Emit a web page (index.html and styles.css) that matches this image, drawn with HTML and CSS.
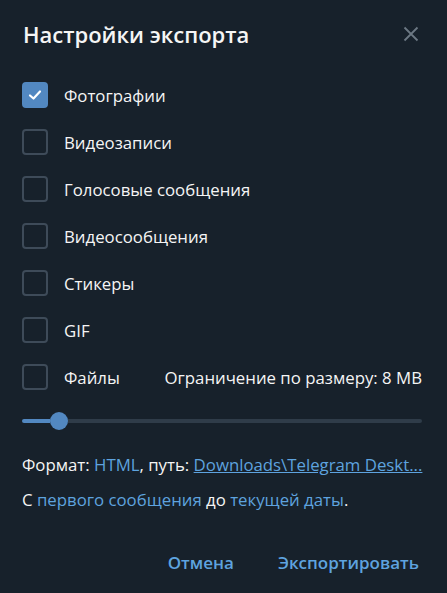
FILE: index.html
```html
<!DOCTYPE html>
<html lang="ru">
<head>
<meta charset="utf-8">
<link rel="stylesheet" href="styles.css">
</head>
<body>
<div class="box">
  <div class="header">
    <div class="title">Настройки экспорта</div>
    <svg class="close" width="16" height="16" viewBox="0 0 16 16"><path d="M1.5 1.5L14.5 14.5M14.5 1.5L1.5 14.5" stroke="#6c7883" stroke-width="1.8" fill="none"/></svg>
  </div>
  <div class="list">
    <div class="row"><span class="cb on"><svg width="14" height="12" viewBox="0 0 14 12"><path d="M2 6.5L5.5 9.5L12 2.5" stroke="#fff" stroke-width="2.2" fill="none" stroke-linecap="round" stroke-linejoin="round"/></svg></span><span class="label">Фотографии</span></div>
    <div class="row"><span class="cb"></span><span class="label">Видеозаписи</span></div>
    <div class="row"><span class="cb"></span><span class="label">Голосовые сообщения</span></div>
    <div class="row"><span class="cb"></span><span class="label">Видеосообщения</span></div>
    <div class="row"><span class="cb"></span><span class="label">Стикеры</span></div>
    <div class="row"><span class="cb"></span><span class="label">GIF</span></div>
    <div class="row"><span class="cb"></span><span class="label">Файлы</span><span class="limit">Ограничение по размеру: 8 MB</span></div>
  </div>
  <div class="slider"><div class="fill"></div><div class="knob"></div><div class="rest"></div></div>
  <div class="info">Формат: <span class="link">HTML</span>, путь: <span class="link u">Downloads\Telegram Deskt...</span></div>
  <div class="info second">С <span class="link">первого сообщения</span> до <span class="link">текущей даты</span>.</div>
  <div class="buttons">
    <span class="btn">Отмена</span>
    <span class="btn">Экспортировать</span>
  </div>
</div>
</body>
</html>
```
FILE: styles.css
```css
html, body {
  margin: 0;
  padding: 0;
  background: #17212b;
}
body {
  width: 447px;
  height: 593px;
  overflow: hidden;
  font-family: "Open Sans", "Noto Sans", sans-serif;
  color: #f5f5f5;
  font-size: 16.8px;
}
.box {
  display: flex;
  flex-direction: column;
  padding: 0 25px 0 22px;
}
.header {
  display: flex;
  align-items: center;
  justify-content: space-between;
  height: 68px;
  padding-left: 1px;
}
.title {
  font-size: 22px;
  font-weight: 600;
}
.close {
  margin-right: 3px;
}
.list {
  display: flex;
  flex-direction: column;
  gap: 21px;
  margin-top: 14px;
}
.row {
  display: flex;
  align-items: center;
  height: 26px;
}
.cb {
  width: 26px;
  height: 26px;
  box-sizing: border-box;
  border: 2px solid #3e4b59;
  border-radius: 4px;
  display: flex;
  align-items: center;
  justify-content: center;
  flex-shrink: 0;
}
.cb.on {
  background: #5288c1;
  border-color: #5288c1;
}
.label {
  margin-left: 16px;
}
.limit {
  margin-left: auto;
}
.slider {
  display: flex;
  align-items: center;
  height: 20px;
  margin-top: 21px;
}
.fill {
  width: 28px;
  height: 4px;
  background: #5288c1;
  border-radius: 2px 0 0 2px;
}
.knob {
  width: 18px;
  height: 18px;
  border-radius: 50%;
  background: #5288c1;
  flex-shrink: 0;
}
.rest {
  flex: 1;
  height: 4px;
  background: #2f3c49;
  border-radius: 0 2px 2px 0;
}
.info {
  margin-top: 22px;
  line-height: 24px;
  white-space: nowrap;
}
.info.second {
  margin-top: 11px;
}
.link {
  color: #5ea3df;
}
.u {
  text-decoration: underline;
}
.buttons {
  display: flex;
  justify-content: flex-end;
  gap: 44px;
  margin-top: 39px;
  padding-right: 3px;
  font-size: 17px;
}
.btn {
  color: #5ea3df;
  font-weight: 600;
  line-height: 24px;
}
```
